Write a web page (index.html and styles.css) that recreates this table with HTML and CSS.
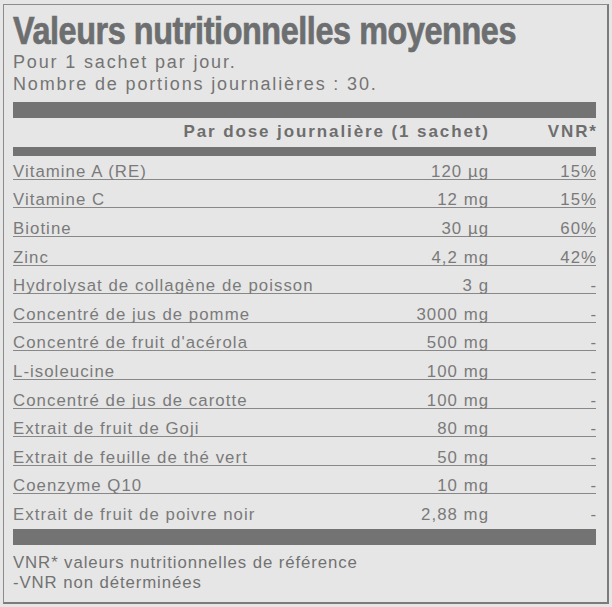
FILE: index.html
```html
<!DOCTYPE html>
<html lang="fr">
<head>
<meta charset="utf-8">
<title>Valeurs nutritionnelles moyennes</title>
<link rel="stylesheet" href="styles.css">
</head>
<body>
<div class="panel">
  <h1 class="title"><span class="title-text">Valeurs nutritionnelles moyennes</span></h1>
  <p class="sub">Pour 1 sachet par jour.<br>Nombre de portions journalières : 30.</p>
  <div class="bar bar-thick"></div>
  <div class="head">
    <span class="h-dose">Par dose journalière (1 sachet)</span>
    <span class="h-vnr">VNR*</span>
  </div>
  <div class="bar bar-thin"></div>
  <div class="rows">
    <div class="row"><span class="name">Vitamine A (RE)</span><span class="amt">120 µg</span><span class="vnr">15%</span></div>
    <div class="row"><span class="name">Vitamine C</span><span class="amt">12 mg</span><span class="vnr">15%</span></div>
    <div class="row"><span class="name">Biotine</span><span class="amt">30 µg</span><span class="vnr">60%</span></div>
    <div class="row"><span class="name">Zinc</span><span class="amt">4,2 mg</span><span class="vnr">42%</span></div>
    <div class="row"><span class="name">Hydrolysat de collagène de poisson</span><span class="amt">3 g</span><span class="vnr">-</span></div>
    <div class="row"><span class="name">Concentré de jus de pomme</span><span class="amt">3000 mg</span><span class="vnr">-</span></div>
    <div class="row"><span class="name">Concentré de fruit d'acérola</span><span class="amt">500 mg</span><span class="vnr">-</span></div>
    <div class="row"><span class="name">L-isoleucine</span><span class="amt">100 mg</span><span class="vnr">-</span></div>
    <div class="row"><span class="name">Concentré de jus de carotte</span><span class="amt">100 mg</span><span class="vnr">-</span></div>
    <div class="row"><span class="name">Extrait de fruit de Goji</span><span class="amt">80 mg</span><span class="vnr">-</span></div>
    <div class="row"><span class="name">Extrait de feuille de thé vert</span><span class="amt">50 mg</span><span class="vnr">-</span></div>
    <div class="row"><span class="name">Coenzyme Q10</span><span class="amt">10 mg</span><span class="vnr">-</span></div>
    <div class="row"><span class="name">Extrait de fruit de poivre noir</span><span class="amt">2,88 mg</span><span class="vnr">-</span></div>
  </div>
  <div class="bar bar-foot"></div>
  <p class="foot">VNR* valeurs nutritionnelles de référence<br>-VNR non déterminées</p>
</div>
</body>
</html>
```

FILE: styles.css
```css
html, body {
  margin: 0;
  padding: 0;
  background: #e6e6e6;
}

body {
  font-family: "Liberation Sans", Arial, Helvetica, sans-serif;
  color: #7a7a7a;
}

.panel {
  box-sizing: border-box;
  width: 606px;
  height: 600px;
  margin: 4px 0 0 3px;
  border: 1px solid #8c8c8c;
  border-right: 2px solid #7c7c7c;
  border-bottom: 2px solid #7c7c7c;
  padding: 6px 11px 0 9px;
  background: #e6e6e6;
}

.title {
  margin: 0;
  font-family: "Liberation Sans", Arial, sans-serif;
  font-weight: bold;
  font-size: 39px;
  line-height: 40px;
  color: #6d6e70;
  white-space: nowrap;
}

.title-text {
  display: inline-block;
  transform: scaleX(0.83);
  transform-origin: 0 50%;
  letter-spacing: -0.5px;
  -webkit-text-stroke: 0.7px #6d6e70;
}

.sub {
  margin: 0;
  font-size: 18px;
  line-height: 22.4px;
  letter-spacing: 1.85px;
  color: #747474;
}

.bar {
  background: #737373;
}

.bar-thick {
  height: 16px;
  margin-top: 6px;
}

.bar-thin {
  height: 9px;
}

.bar-foot {
  height: 16px;
  margin-top: 7px;
}

.head {
  display: grid;
  grid-template-columns: 1fr 108px;
  padding: 4px 0 5px;
  font-weight: bold;
  font-size: 17px;
  line-height: 20px;
  letter-spacing: 1.9px;
  color: #6e6e6e;
  text-align: right;
}

.head span {
  margin-right: -1.9px;
}

.row {
  display: grid;
  grid-template-columns: 1fr 150px 108px;
  padding-top: 13.6px;
  font-size: 16.8px;
  line-height: 14px;
  letter-spacing: 1.05px;
  border-bottom: 1px solid #888888;
}

.row:first-child {
  padding-top: 9px;
}

.row:last-child {
  border-bottom: 0;
}

.amt, .vnr {
  text-align: right;
  margin-right: -1.05px;
}

.foot {
  margin: 8px 0 0;
  font-size: 16.8px;
  line-height: 20.3px;
  letter-spacing: 0.9px;
  color: #727272;
}
```
